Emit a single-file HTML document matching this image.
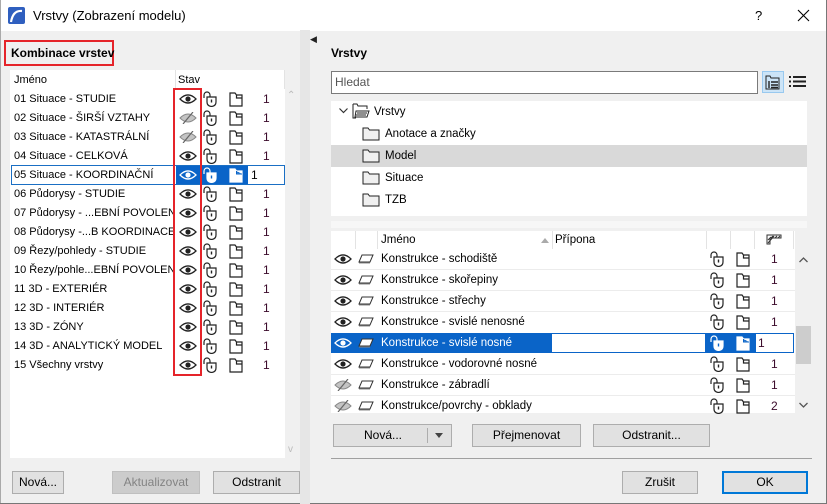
<!DOCTYPE html>
<html><head><meta charset="utf-8">
<style>
*{box-sizing:border-box;margin:0;padding:0}
body{width:827px;height:504px;overflow:hidden;background:#f0f0f0;font-family:"Liberation Sans",sans-serif;font-size:12px;color:#000;position:relative}
.a{position:absolute}
.t{position:absolute;white-space:nowrap;line-height:14px}
.l{font-size:11px}
.r{font-size:11.5px}
.btn{position:absolute;background:#e1e1e1;border:1px solid #adadad;text-align:center;line-height:21px;font-size:12px}
.num{color:#3a0a2a}
svg.i{position:absolute;overflow:visible}
</style></head><body>
<svg width="0" height="0" style="position:absolute">
<defs>
<symbol id="eye" viewBox="0 0 18 12"><path d="M1 6 Q9 -2 17 6 Q9 14 1 6Z" fill="none" stroke="#222" stroke-width="1.3"/><circle cx="9" cy="6" r="2.6" fill="#222"/></symbol>
<symbol id="eyew" viewBox="0 0 18 12"><path d="M1 6 Q9 -2 17 6 Q9 14 1 6Z" fill="none" stroke="#fff" stroke-width="1.3"/><circle cx="9" cy="6" r="2.6" fill="#fff"/></symbol>
<symbol id="eyeoff" viewBox="0 0 18 12"><path d="M1 6 Q9 -2 17 6 Q9 14 1 6Z" fill="#c4c4c4" stroke="#888" stroke-width="1"/><path d="M4 12 L14 0" stroke="#666" stroke-width="1.2"/></symbol>
<symbol id="lock" viewBox="0 0 14 16"><path d="M1 7 V4 A3 3 0 0 1 7 4 V6" fill="none" stroke="#222" stroke-width="1.2"/><path d="M4 6 H13 V11 Q13 15 8.5 15.5 Q4 15 4 11Z" fill="#fff" stroke="#222" stroke-width="1.2"/><path d="M8.5 8.5 V11.5" stroke="#222" stroke-width="1.4"/></symbol>
<symbol id="lockw" viewBox="0 0 14 16"><path d="M1 7 V4 A3 3 0 0 1 7 4 V6" fill="none" stroke="#fff" stroke-width="1.2"/><path d="M4 6 H13 V11 Q13 15 8.5 15.5 Q4 15 4 11Z" fill="#fff" stroke="#fff" stroke-width="1.2"/><path d="M8.5 8.5 V11.5" stroke="#0a64c8" stroke-width="1.4"/></symbol>
<symbol id="doc" viewBox="0 0 14 16"><path d="M1 2 H6 L7.5 4 H13 V15 H1Z M7.5 4 V7 H13" fill="#fff" stroke="#222" stroke-width="1.2"/></symbol>
<symbol id="docw" viewBox="0 0 14 16"><path d="M1 2 H6 L7.5 4 H13 V15 H1Z M7.5 4 V7 H13" fill="#fff" stroke="#fff" stroke-width="1.2"/><path d="M7.5 4 V7 H13" fill="none" stroke="#0a64c8"/></symbol>
<symbol id="lay" viewBox="0 0 16 10"><path d="M4 1 H15 L12 8 H1Z" fill="#fff" stroke="#333" stroke-width="1"/><path d="M1 9 H12" stroke="#888"/></symbol>
<symbol id="fold" viewBox="0 0 18 14"><path d="M1 1 H6 L7.5 3 H17 V13 H1Z" fill="#f0f0f0" stroke="#222" stroke-width="1"/></symbol>
</defs></svg>

<!-- title bar -->
<div class="a" style="left:0;top:0;width:827px;height:31px;background:#fff"></div>
<svg class="i" style="left:8px;top:7px" width="17" height="17"><rect width="17" height="17" rx="2" fill="#2f5fbf"/><path d="M3 15 Q5 3 14 4" stroke="#fff" stroke-width="2.2" fill="none"/></svg>
<div class="t" style="left:33px;top:9px;font-size:13px">Vrstvy (Zobrazení modelu)</div>
<div class="t" style="left:755px;top:9px;font-size:13px">?</div>
<svg class="i" style="left:798px;top:10px" width="11" height="11"><path d="M0 0L11 11M11 0L0 11" stroke="#000" stroke-width="1.1"/></svg>
<div class="a" style="left:826px;top:0;width:1px;height:504px;background:#777"></div>
<div class="a" style="left:0;top:0;width:1px;height:504px;background:#aaa"></div>
<div class="a" style="left:0;top:503px;width:827px;height:1px;background:#777"></div>

<!-- left panel -->
<div class="a" style="left:4px;top:40px;width:110px;height:26px;border:2px solid #e5242a"></div>
<div class="t" style="left:11px;top:46px;font-weight:bold">Kombinace vrstev</div>
<div class="a" style="left:10px;top:70px;width:275px;height:388px;background:#fff"></div>
<div class="a" style="left:175px;top:70px;width:1px;height:19px;background:#e3e3e3"></div>
<div class="a" style="left:284px;top:70px;width:1px;height:19px;background:#e3e3e3"></div>
<div class="t l" style="left:14px;top:73px">Jméno</div>
<div class="t l" style="left:178px;top:73px">Stav</div>
<div class="a" style="left:285px;top:88px;width:15px;height:370px;background:#f0f0f0"></div>
<div class="t" style="left:287px;top:89px;color:#bbb;font-size:10px">&#8963;</div>
<div class="t" style="left:288px;top:443px;color:#bbb;font-size:10px">v</div>
<div class="a" style="left:300px;top:30px;width:10px;height:474px;background:#e6e6e6"></div>
<div class="t" style="left:310px;top:32px;font-size:9px;color:#222">&#9664;</div>

<!-- selected row left -->
<div class="a" style="left:11px;top:165px;width:274px;height:20px;border:1px solid #1a6fc4;background:#fff"></div>
<div class="a" style="left:176px;top:166px;width:72px;height:18px;background:#0a64c8"></div>
<div class="a" style="left:249px;top:166px;width:35px;height:18px;background:#fff"></div>

<div class="t l" style="left:14px;top:92px">01 Situace - STUDIE</div>
<div class="t l" style="left:14px;top:111px">02 Situace - ŠIRŠÍ VZTAHY</div>
<div class="t l" style="left:14px;top:130px">03 Situace - KATASTRÁLNÍ</div>
<div class="t l" style="left:14px;top:149px">04 Situace - CELKOVÁ</div>
<div class="t l" style="left:14px;top:168px">05 Situace - KOORDINAČNÍ</div>
<div class="t l" style="left:14px;top:187px">06 Půdorysy - STUDIE</div>
<div class="t l" style="left:14px;top:206px;width:160px;overflow:hidden">07 Půdorysy - ...EBNÍ POVOLENÍ</div>
<div class="t l" style="left:14px;top:225px;width:160px;overflow:hidden">08 Půdorysy -...B KOORDINACE</div>
<div class="t l" style="left:14px;top:244px">09 Řezy/pohledy - STUDIE</div>
<div class="t l" style="left:14px;top:263px;width:160px;overflow:hidden">10 Řezy/pohle...EBNÍ POVOLENÍ</div>
<div class="t l" style="left:14px;top:282px">11 3D - EXTERIÉR</div>
<div class="t l" style="left:14px;top:301px">12 3D - INTERIÉR</div>
<div class="t l" style="left:14px;top:320px">13 3D - ZÓNY</div>
<div class="t l" style="left:14px;top:339px">14 3D - ANALYTICKÝ MODEL</div>
<div class="t l" style="left:14px;top:358px">15 Všechny vrstvy</div>

<!-- left icons -->
<svg class="i" style="left:179px;top:93px" width="18" height="12"><use href="#eye"/></svg>
<svg class="i" style="left:179px;top:112px" width="18" height="12"><use href="#eyeoff"/></svg>
<svg class="i" style="left:179px;top:131px" width="18" height="12"><use href="#eyeoff"/></svg>
<svg class="i" style="left:179px;top:150px" width="18" height="12"><use href="#eye"/></svg>
<svg class="i" style="left:179px;top:169px" width="18" height="12"><use href="#eyew"/></svg>
<svg class="i" style="left:179px;top:188px" width="18" height="12"><use href="#eye"/></svg>
<svg class="i" style="left:179px;top:207px" width="18" height="12"><use href="#eye"/></svg>
<svg class="i" style="left:179px;top:226px" width="18" height="12"><use href="#eye"/></svg>
<svg class="i" style="left:179px;top:245px" width="18" height="12"><use href="#eye"/></svg>
<svg class="i" style="left:179px;top:264px" width="18" height="12"><use href="#eye"/></svg>
<svg class="i" style="left:179px;top:283px" width="18" height="12"><use href="#eye"/></svg>
<svg class="i" style="left:179px;top:302px" width="18" height="12"><use href="#eye"/></svg>
<svg class="i" style="left:179px;top:321px" width="18" height="12"><use href="#eye"/></svg>
<svg class="i" style="left:179px;top:340px" width="18" height="12"><use href="#eye"/></svg>
<svg class="i" style="left:179px;top:359px" width="18" height="12"><use href="#eye"/></svg>

<div class="a" style="left:173px;top:88px;width:29px;height:288px;border:2px solid #e5242a"></div>

<!-- locks/docs/nums left -->
<div class="a" style="left:203px;top:89px;width:80px">
<svg class="i" style="left:0;top:2px" width="14" height="16"><use href="#lock"/></svg><svg class="i" style="left:26px;top:2px" width="14" height="16"><use href="#doc"/></svg><div class="t num" style="left:60px;top:3px">1</div>
<svg class="i" style="left:0;top:21px" width="14" height="16"><use href="#lock"/></svg><svg class="i" style="left:26px;top:21px" width="14" height="16"><use href="#doc"/></svg><div class="t num" style="left:60px;top:22px">1</div>
<svg class="i" style="left:0;top:40px" width="14" height="16"><use href="#lock"/></svg><svg class="i" style="left:26px;top:40px" width="14" height="16"><use href="#doc"/></svg><div class="t num" style="left:60px;top:41px">1</div>
<svg class="i" style="left:0;top:59px" width="14" height="16"><use href="#lock"/></svg><svg class="i" style="left:26px;top:59px" width="14" height="16"><use href="#doc"/></svg><div class="t num" style="left:60px;top:60px">1</div>
<svg class="i" style="left:0;top:78px" width="14" height="16"><use href="#lockw"/></svg><svg class="i" style="left:26px;top:78px" width="14" height="16"><use href="#docw"/></svg><div class="t" style="left:48px;top:79px">1</div>
<svg class="i" style="left:0;top:97px" width="14" height="16"><use href="#lock"/></svg><svg class="i" style="left:26px;top:97px" width="14" height="16"><use href="#doc"/></svg><div class="t num" style="left:60px;top:98px">1</div>
<svg class="i" style="left:0;top:116px" width="14" height="16"><use href="#lock"/></svg><svg class="i" style="left:26px;top:116px" width="14" height="16"><use href="#doc"/></svg><div class="t num" style="left:60px;top:117px">1</div>
<svg class="i" style="left:0;top:135px" width="14" height="16"><use href="#lock"/></svg><svg class="i" style="left:26px;top:135px" width="14" height="16"><use href="#doc"/></svg><div class="t num" style="left:60px;top:136px">1</div>
<svg class="i" style="left:0;top:154px" width="14" height="16"><use href="#lock"/></svg><svg class="i" style="left:26px;top:154px" width="14" height="16"><use href="#doc"/></svg><div class="t num" style="left:60px;top:155px">1</div>
<svg class="i" style="left:0;top:173px" width="14" height="16"><use href="#lock"/></svg><svg class="i" style="left:26px;top:173px" width="14" height="16"><use href="#doc"/></svg><div class="t num" style="left:60px;top:174px">1</div>
<svg class="i" style="left:0;top:192px" width="14" height="16"><use href="#lock"/></svg><svg class="i" style="left:26px;top:192px" width="14" height="16"><use href="#doc"/></svg><div class="t num" style="left:60px;top:193px">1</div>
<svg class="i" style="left:0;top:211px" width="14" height="16"><use href="#lock"/></svg><svg class="i" style="left:26px;top:211px" width="14" height="16"><use href="#doc"/></svg><div class="t num" style="left:60px;top:212px">1</div>
<svg class="i" style="left:0;top:230px" width="14" height="16"><use href="#lock"/></svg><svg class="i" style="left:26px;top:230px" width="14" height="16"><use href="#doc"/></svg><div class="t num" style="left:60px;top:231px">1</div>
<svg class="i" style="left:0;top:249px" width="14" height="16"><use href="#lock"/></svg><svg class="i" style="left:26px;top:249px" width="14" height="16"><use href="#doc"/></svg><div class="t num" style="left:60px;top:250px">1</div>
<svg class="i" style="left:0;top:268px" width="14" height="16"><use href="#lock"/></svg><svg class="i" style="left:26px;top:268px" width="14" height="16"><use href="#doc"/></svg><div class="t num" style="left:60px;top:269px">1</div>
</div>

<div class="btn" style="left:12px;top:471px;width:52px;height:23px">Nová...</div>
<div class="btn" style="left:112px;top:471px;width:88px;height:23px;background:#ccc;border-color:#bfbfbf;color:#838383">Aktualizovat</div>
<div class="btn" style="left:213px;top:471px;width:87px;height:23px">Odstranit</div>

<!-- right panel -->
<div class="t" style="left:331px;top:46px;font-weight:bold">Vrstvy</div>
<div class="a" style="left:331px;top:71px;width:427px;height:23px;background:#fff;border:1px solid #7a7a7a"></div>
<div class="t" style="left:335px;top:75px;color:#555">Hledat</div>
<div class="a" style="left:762px;top:71px;width:22px;height:22px;background:#cce4f7;border:1px solid #99c9ef"></div>
<svg class="i" style="left:765px;top:75px" width="16" height="15"><path d="M1 1H5L6 3H14V14H1Z" fill="none" stroke="#222"/><path d="M4 6V13M6 7H13M6 10H13M6 12.5H13" stroke="#222" stroke-width="1.4"/></svg>
<svg class="i" style="left:789px;top:76px" width="18" height="12"><path d="M0 1H2M4 1H17M0 5.5H2M4 5.5H17M0 10H2M4 10H17" stroke="#222" stroke-width="2"/></svg>

<div class="a" style="left:331px;top:101px;width:476px;height:115px;background:#fff"></div>
<div class="a" style="left:331px;top:145px;width:476px;height:22px;background:#d9d9d9"></div>
<svg class="i" style="left:339px;top:108px" width="9" height="6"><path d="M0.5 0.5L4.5 4.5L8.5 0.5" fill="none" stroke="#333" stroke-width="1.2"/></svg>
<svg class="i" style="left:352px;top:103px" width="18" height="16"><path d="M1 1H5L6 3H15V6M1 1V15H4" fill="none" stroke="#222"/><path d="M4 8H17L15 14H3Z M5 10H15M4 12H14" fill="#fff" stroke="#222"/></svg>
<div class="t r" style="left:374px;top:105px">Vrstvy</div>
<svg class="i" style="left:362px;top:127px" width="18" height="14"><use href="#fold"/></svg><div class="t r" style="left:385px;top:127px">Anotace a značky</div>
<svg class="i" style="left:362px;top:149px" width="18" height="14"><use href="#fold"/></svg><div class="t r" style="left:385px;top:149px">Model</div>
<svg class="i" style="left:362px;top:171px" width="18" height="14"><use href="#fold"/></svg><div class="t r" style="left:385px;top:171px">Situace</div>
<svg class="i" style="left:362px;top:193px" width="18" height="14"><use href="#fold"/></svg><div class="t r" style="left:385px;top:193px">TZB</div>
<div class="a" style="left:331px;top:221px;width:476px;height:7px;background:#f7f7f7"></div>

<!-- layer table -->
<div class="a" style="left:331px;top:231px;width:464px;height:182px;background:#fff"></div>
<div class="a" style="left:355px;top:231px;width:1px;height:18px;background:#e3e3e3"></div>
<div class="a" style="left:377px;top:231px;width:1px;height:18px;background:#e3e3e3"></div>
<div class="a" style="left:552px;top:231px;width:1px;height:18px;background:#e3e3e3"></div>
<div class="a" style="left:706px;top:231px;width:1px;height:18px;background:#e3e3e3"></div>
<div class="a" style="left:730px;top:231px;width:1px;height:18px;background:#e3e3e3"></div>
<div class="a" style="left:754px;top:231px;width:1px;height:18px;background:#e3e3e3"></div>
<div class="a" style="left:793px;top:231px;width:1px;height:18px;background:#e3e3e3"></div>
<div class="t r" style="left:381px;top:233px">Jméno</div>
<svg class="i" style="left:541px;top:238px" width="8" height="5"><path d="M0 5L4 0L8 5Z" fill="#aaa"/></svg>
<div class="t r" style="left:555px;top:233px">Přípona</div>
<svg class="i" style="left:766px;top:234px" width="16" height="11"><path d="M1 1H15V4H4V10H1Z" fill="#fff" stroke="#333"/><path d="M2 9L8 2M5 4L7 2M9 4L11 2M12 4L14 2M2 6L5 3" stroke="#333"/></svg>

<div class="a" style="left:331px;top:269px;width:464px;height:1px;background:#ececec"></div>
<div class="a" style="left:331px;top:290px;width:464px;height:1px;background:#ececec"></div>
<div class="a" style="left:331px;top:311px;width:464px;height:1px;background:#ececec"></div>
<div class="a" style="left:331px;top:374px;width:464px;height:1px;background:#ececec"></div>
<div class="a" style="left:331px;top:395px;width:464px;height:1px;background:#ececec"></div>
<div class="a" style="left:331px;top:333px;width:463px;height:20px;background:#0a64c8"></div>
<div class="a" style="left:552px;top:334px;width:153px;height:18px;background:#fff"></div>
<div class="a" style="left:756px;top:334px;width:37px;height:18px;background:#fff"></div>

<svg class="i" style="left:334px;top:253px" width="18" height="12"><use href="#eye"/></svg>
<svg class="i" style="left:334px;top:274px" width="18" height="12"><use href="#eye"/></svg>
<svg class="i" style="left:334px;top:295px" width="18" height="12"><use href="#eye"/></svg>
<svg class="i" style="left:334px;top:316px" width="18" height="12"><use href="#eye"/></svg>
<svg class="i" style="left:334px;top:337px" width="18" height="12"><use href="#eyew"/></svg>
<svg class="i" style="left:334px;top:358px" width="18" height="12"><use href="#eye"/></svg>
<svg class="i" style="left:334px;top:379px" width="18" height="12"><use href="#eyeoff"/></svg>
<svg class="i" style="left:334px;top:400px" width="18" height="12"><use href="#eyeoff"/></svg>

<svg class="i" style="left:358px;top:254px" width="16" height="10"><use href="#lay"/></svg>
<svg class="i" style="left:358px;top:275px" width="16" height="10"><use href="#lay"/></svg>
<svg class="i" style="left:358px;top:296px" width="16" height="10"><use href="#lay"/></svg>
<svg class="i" style="left:358px;top:317px" width="16" height="10"><use href="#lay"/></svg>
<svg class="i" style="left:358px;top:338px" width="16" height="10"><use href="#lay"/></svg>
<svg class="i" style="left:358px;top:359px" width="16" height="10"><use href="#lay"/></svg>
<svg class="i" style="left:358px;top:380px" width="16" height="10"><use href="#lay"/></svg>
<svg class="i" style="left:358px;top:401px" width="16" height="10"><use href="#lay"/></svg>

<div class="t r" style="left:381px;top:252px">Konstrukce - schodiště</div>
<div class="t r" style="left:381px;top:273px">Konstrukce - skořepiny</div>
<div class="t r" style="left:381px;top:294px">Konstrukce - střechy</div>
<div class="t r" style="left:381px;top:315px">Konstrukce - svislé nenosné</div>
<div class="t r" style="left:381px;top:336px;color:#fff">Konstrukce - svislé nosné</div>
<div class="t r" style="left:381px;top:357px">Konstrukce - vodorovné nosné</div>
<div class="t r" style="left:381px;top:378px">Konstrukce - zábradlí</div>
<div class="t r" style="left:381px;top:399px">Konstrukce/povrchy - obklady</div>

<div class="a" style="left:710px;top:250px;width:80px">
<svg class="i" style="left:0;top:1px" width="14" height="16"><use href="#lock"/></svg><svg class="i" style="left:26px;top:1px" width="14" height="16"><use href="#doc"/></svg><div class="t num" style="left:61px;top:2px">1</div>
<svg class="i" style="left:0;top:22px" width="14" height="16"><use href="#lock"/></svg><svg class="i" style="left:26px;top:22px" width="14" height="16"><use href="#doc"/></svg><div class="t num" style="left:61px;top:23px">1</div>
<svg class="i" style="left:0;top:43px" width="14" height="16"><use href="#lock"/></svg><svg class="i" style="left:26px;top:43px" width="14" height="16"><use href="#doc"/></svg><div class="t num" style="left:61px;top:44px">1</div>
<svg class="i" style="left:0;top:64px" width="14" height="16"><use href="#lock"/></svg><svg class="i" style="left:26px;top:64px" width="14" height="16"><use href="#doc"/></svg><div class="t num" style="left:61px;top:65px">1</div>
<svg class="i" style="left:0;top:85px" width="14" height="16"><use href="#lockw"/></svg><svg class="i" style="left:26px;top:85px" width="14" height="16"><use href="#docw"/></svg><div class="t num" style="left:48px;top:86px">1</div>
<svg class="i" style="left:0;top:106px" width="14" height="16"><use href="#lock"/></svg><svg class="i" style="left:26px;top:106px" width="14" height="16"><use href="#doc"/></svg><div class="t num" style="left:61px;top:107px">1</div>
<svg class="i" style="left:0;top:127px" width="14" height="16"><use href="#lock"/></svg><svg class="i" style="left:26px;top:127px" width="14" height="16"><use href="#doc"/></svg><div class="t num" style="left:61px;top:128px">1</div>
<svg class="i" style="left:0;top:148px" width="14" height="16"><use href="#lock"/></svg><svg class="i" style="left:26px;top:148px" width="14" height="16"><use href="#doc"/></svg><div class="t num" style="left:61px;top:149px">2</div>
</div>

<div class="a" style="left:796px;top:326px;width:15px;height:38px;background:#cdcdcd"></div>
<svg class="i" style="left:799px;top:257px" width="9" height="6"><path d="M0.5 5L4.5 1L8.5 5" fill="none" stroke="#555" stroke-width="1.3"/></svg>
<svg class="i" style="left:799px;top:402px" width="9" height="6"><path d="M0.5 1L4.5 5L8.5 1" fill="none" stroke="#555" stroke-width="1.3"/></svg>

<div class="btn" style="left:333px;top:424px;width:119px;height:23px;text-align:left;padding-left:30px">Nová...</div>
<div class="a" style="left:427px;top:428px;width:1px;height:15px;background:#adadad"></div>
<svg class="i" style="left:435px;top:433px" width="8" height="5"><path d="M0 0H8L4 5Z" fill="#444"/></svg>
<div class="btn" style="left:472px;top:424px;width:109px;height:23px">Přejmenovat</div>
<div class="btn" style="left:593px;top:424px;width:117px;height:23px">Odstranit...</div>
<div class="a" style="left:331px;top:458px;width:481px;height:1px;background:#a0a0a0"></div>
<div class="btn" style="left:622px;top:471px;width:76px;height:23px">Zrušit</div>
<div class="btn" style="left:722px;top:471px;width:86px;height:23px;border:2px solid #0078d7;line-height:19px">OK</div>
</body></html>
